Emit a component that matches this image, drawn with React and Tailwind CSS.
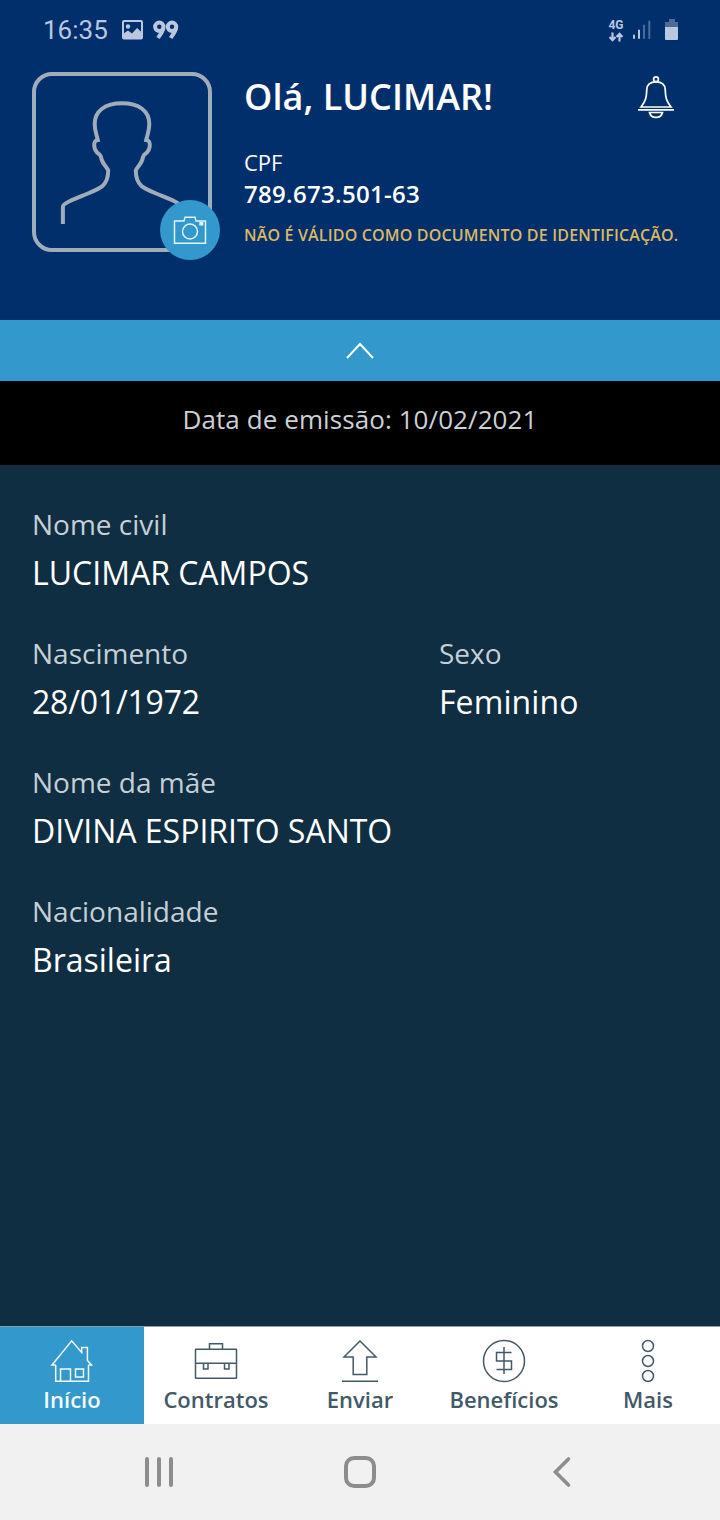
const fields = [
    [{ label: "Nome civil", value: "LUCIMAR CAMPOS" }],
    [
        { label: "Nascimento", value: "28/01/1972", tracking: "tracking-[-0.2px]" },
        { label: "Sexo", value: "Feminino", tracking: "tracking-[0.1px]" },
    ],
    [{ label: "Nome da mãe", value: "DIVINA ESPIRITO SANTO" }],
    [{ label: "Nacionalidade", value: "Brasileira" }],
]

function StatusBar() {
    return (
        <div className="flex h-[60px] items-center justify-between pl-[43px] pr-[41px] text-[#b9c7df] font-['Roboto',sans-serif]">
            <div className="flex items-center">
                <span className="w-[65px] text-[26px] leading-[30px] whitespace-nowrap">16:35</span>
                <svg className="ml-[14px]" width="21" height="20" viewBox="0 0 21 20">
                    <rect x="1" y="1" width="19" height="17.5" rx="1" fill="none" stroke="currentColor" strokeWidth="2" />
                    <circle cx="6" cy="6.5" r="2.2" fill="currentColor" />
                    <path d="M1 14 L6 10.5 L10 13.5 L15 8 L20 12.5 V19 H1 Z" fill="currentColor" />
                </svg>
                <svg className="ml-[10px]" width="26" height="20" viewBox="0 0 26 20" fill="none" stroke="currentColor" strokeWidth="4">
                    <circle cx="6.3" cy="6.8" r="4.2" />
                    <path d="M10.4 7.5 C10.4 11 7.5 14 5 18" />
                    <circle cx="19" cy="6.8" r="4.2" />
                    <path d="M23.1 7.5 C23.1 11 20.2 14 17.7 18" />
                </svg>
            </div>
            <div className="flex items-center">
                <div className="flex w-4 flex-col items-center">
                    <span className="text-[12px] leading-[12px] font-bold">4G</span>
                    <svg className="mt-px" width="14" height="10" viewBox="0 0 14 10" fill="none" stroke="currentColor" strokeWidth="2.2">
                        <path d="M3.5 0.5 V8.5 M0.5 5 L3.5 8.2 L6.5 5 M10.5 9.5 V1.5 M7.5 5 L10.5 1.8 L13.5 5" />
                    </svg>
                </div>
                <svg className="ml-[8px]" width="20" height="20" viewBox="0 0 20 20" strokeWidth="2" strokeLinecap="round" stroke="currentColor">
                    <path d="M2 15.5 V18 M7 10.5 V18" />
                    <path d="M12 5.5 V18 M17.3 1.5 V18" opacity="0.4" />
                </svg>
                <svg className="ml-[13px]" width="14" height="22" viewBox="0 0 14 22" fill="currentColor">
                    <path d="M4 0 H10 V3 H13 V8 H0 V3 H4 Z" opacity="0.4" />
                    <path d="M0 8 H13 V20 Q13 21 12 21 H1 Q0 21 0 20 Z" />
                </svg>
            </div>
        </div>
    )
}

function Avatar() {
    return (
        <div className="relative h-[180px] w-[180px] shrink-0 rounded-[20px] border-4 border-[#9fadba]">
            <svg width="172" height="172" viewBox="0 0 172 172" fill="none" stroke="#9fadba" strokeWidth="4">
                <path d="M26.9 148 V130.500 C27 127 41 122 50.700 118 C58 115 64 112.500 66.500 110 C71 106 72.200 100 72.200 94.500 C71 91 67.500 89 65.800 84 C64.800 81 65 79.500 63.500 78.500 C59.500 76 58.200 73.500 58.200 69 C58.200 66 58.800 64.500 61.800 64 C60.500 58 58.700 55 58.700 48 C58.700 35 69 27.300 86 27.300 S113.300 35 113.300 48 C113.300 55 111.500 58 110.200 64 C113.200 64.500 113.800 66 113.800 69 C113.800 73.500 112.500 76 108.500 78.500 C107 79.500 107.200 81 106.200 84 C104.500 89 101 91 99.800 94.500 C99.800 100 101 106 105.500 110 C108 112.500 114 115 121.300 118 C131 122 145 127 145.100 130.500 V148" />
            </svg>
            <div className="absolute left-[124px] top-[124px] flex h-[60px] w-[60px] items-center justify-center rounded-full bg-[#3398cc]">
                <svg width="34" height="30" viewBox="0 0 34 30" fill="none" stroke="#e4f3fb" strokeWidth="1.500">
                    <path d="M1.500 6 H11 L12 2.300 H22 L23 6 H32.500 V28.300 H1.500 Z" />
                    <circle cx="17" cy="16.500" r="7.500" />
                    <rect x="26.300" y="7" width="4" height="3.500" fill="#e4f3fb" stroke="none" />
                </svg>
            </div>
        </div>
    )
}

function BellIcon() {
    return (
        <svg width="36" height="43" viewBox="0 0 36 43" fill="none" stroke="#fff" strokeWidth="1.700">
            <circle cx="18" cy="3.300" r="2.400" />
            <path d="M3 31 C8 25 8.500 21 8.800 13.500 C9 8.500 12 5.800 18 5.800 S27 8.500 27.200 13.500 C27.500 21 28 25 33 31 Z" />
            <path d="M0 33.800 H36" />
            <path d="M11.500 36.500 H24.500 C23 43 13 43 11.500 36.500 Z" />
        </svg>
    )
}

const tabs = [
    {
        label: "Início",
        active: true,
        icon: (
            <>
                <path d="M5.700 26 V42.300 H38.500 V26 M5.700 26 H2 L21.700 1.800 L31.700 13.500 V8.500 H37.400 V21.500 L41.500 26 H38.500" />
                <path d="M10.500 42 V30 H20.500 V42 M25.500 30 H33.500 V38 H25.500 Z" />
            </>
        ),
    },
    {
        label: "Contratos",
        icon: (
            <>
                <rect x="1.500" y="10.300" width="41" height="29" rx="0.500" />
                <path d="M15.500 10 V4.700 H28.500 V10 M1.500 24.300 H42.500 M9.500 24 V30 H14 V24 M30.500 24 V30 H35 V24" />
            </>
        ),
    },
    {
        label: "Enviar",
        icon: <path d="M22 2 L38 18 H28.800 V35.400 H15.200 V18 H6 Z M4 42.200 H40" />,
    },
    {
        label: "Benefícios",
        icon: (
            <>
                <circle cx="22" cy="22" r="20.500" />
                <path d="M29.500 13.500 H14.500 V22 H29.500 V30.500 H14.500 M22 8 V35" />
            </>
        ),
    },
    {
        label: "Mais",
        icon: (
            <>
                <circle cx="22" cy="7" r="5.500" />
                <circle cx="22" cy="22" r="5.500" />
                <circle cx="22" cy="37" r="5.500" />
            </>
        ),
    },
]

function TabBar() {
    return (
        <nav className="grid h-[98px] grid-cols-5 border-t border-[#8b9eac] bg-white">
            {tabs.map((tab) => (
                <div
                    key={tab.label}
                    className={`flex flex-col items-center pt-3 ${tab.active ? "bg-[#3398cc] text-[#f4fbff]" : "text-[#425968]"}`}
                >
                    <svg width="44" height="44" viewBox="0 0 44 44" fill="none" stroke="currentColor" strokeWidth="1.500">
                        {tab.icon}
                    </svg>
                    <span className="mt-[2px] text-[22px] leading-[28px] font-semibold">{tab.label}</span>
                </div>
            ))}
        </nav>
    )
}

function SystemNav() {
    return (
        <div className="flex h-24 items-center bg-[#f1f1f1] pl-[143px] text-[#8d8d8d]">
            <svg width="32" height="32" viewBox="0 0 32 32" stroke="currentColor" strokeWidth="4" strokeLinecap="round">
                <path d="M4 3 V29 M16 3 V29 M28 3 V29" />
            </svg>
            <div className="ml-[169px] h-8 w-8 rounded-[10px] border-4 border-[#8d8d8d]" />
            <svg className="ml-[176px]" width="20" height="32" viewBox="0 0 20 32" fill="none" stroke="currentColor" strokeWidth="3.600" strokeLinecap="round">
                <path d="M16.500 3 L3.500 16 L16.500 29" />
            </svg>
        </div>
    )
}

function App() {
    return (
        <div className="flex h-[1520px] w-[720px] flex-col overflow-hidden bg-[#0f2e41] font-['Open_Sans',sans-serif]">
            <header className="h-[320px] bg-[#002f6b]">
                <StatusBar />
                <div className="flex pl-8 pt-3">
                    <Avatar />
                    <div className="ml-8 flex w-[436px] flex-col whitespace-nowrap text-white">
                        <div className="flex h-12 items-start justify-between pr-[6px]">
                            <h1 className="pt-px text-[36px] leading-[48px] font-semibold tracking-[0.05px]">Olá, LUCIMAR!</h1>
                            <div className="pt-1">
                                <BellIcon />
                            </div>
                        </div>
                        <p className="mt-[26px] text-[22px] leading-[32px]">CPF</p>
                        <p className="text-[24px] leading-[32px] font-semibold tracking-[0.3px]">789.673.501-63</p>
                        <p className="mt-[13px] text-[16px] leading-[24px] font-semibold tracking-[0.17px] text-[#dcb863]">
                            NÃO É VÁLIDO COMO DOCUMENTO DE IDENTIFICAÇÃO.
                        </p>
                    </div>
                </div>
            </header>

            <div className="flex h-[61px] items-center justify-center bg-[#3398cc]">
                <svg width="28" height="18" viewBox="0 0 28 18" fill="none" stroke="#fff" strokeWidth="2">
                    <path d="M1 16 L14 2 L27 16" />
                </svg>
            </div>

            <div className="h-[84px] bg-black pt-5 text-center text-[26px] leading-[36px] tracking-[0.08px] text-[#ccd1d4]">
                Data de emissão: 10/02/2021
            </div>

            <main className="flex grow flex-col gap-9 px-8 pt-[39px]">
                {fields.map((row) => (
                    <div key={row[0].label} className="grid grid-cols-[407px_1fr]">
                        {row.map((field) => (
                            <div key={field.label} className="whitespace-nowrap">
                                <p className="text-[28px] leading-[40px] text-[#c5cfd5]">{field.label}</p>
                                <p className={`mt-[5px] text-[32px] leading-[48px] text-white ${field.tracking || ""}`}>
                                    {field.value}
                                </p>
                            </div>
                        ))}
                    </div>
                ))}
            </main>

            <TabBar />
            <SystemNav />
        </div>
    )
}

export default App
